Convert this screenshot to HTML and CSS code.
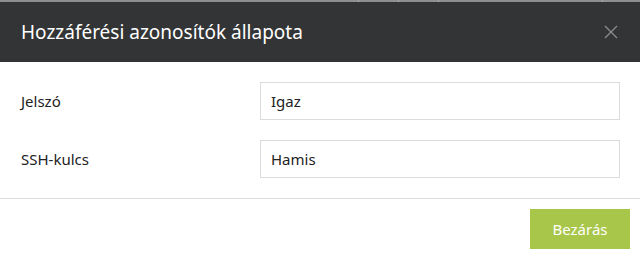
FILE: index.html
```html
<!DOCTYPE html>
<html lang="hu">
<head>
  <meta charset="UTF-8" />
  <meta name="viewport" content="width=device-width, initial-scale=1" />
  <title>Hozzáférési azonosítók állapota</title>
  <link rel="stylesheet" href="styles.css">
</head>
<body>
  <div class="backdrop">
    <span class="seg seg-a"></span>
    <span class="seg seg-b"></span>
    <span class="seg seg-c"></span>
    <span class="seg seg-d"></span>
    <span class="seg seg-e"></span>
  </div>

  <div class="modal">
    <div class="modal-header">
      <h2>Hozzáférési azonosítók állapota</h2>
      <button class="close" aria-label="Bezárás">
        <svg width="14" height="14" viewBox="0 0 14 14">
          <path d="M1 1 L13 13 M13 1 L1 13" stroke="#8c8c8c" stroke-width="1.3" fill="none" />
        </svg>
      </button>
    </div>

    <div class="modal-body">
      <div class="row">
        <label>Jelszó</label>
        <div class="field">Igaz</div>
      </div>
      <div class="row">
        <label>SSH-kulcs</label>
        <div class="field">Hamis</div>
      </div>
    </div>

    <div class="modal-footer">
      <button class="btn-close">Bezárás</button>
    </div>
  </div>
</body>
</html>
```

FILE: styles.css
```css
body { margin: 0; font-family: "Noto Sans", "Open Sans", sans-serif; background: #fff; color: #222; }
.backdrop { display: flex; height: 2px; background: #8e8e8e; }
.seg { height: 2px; border-right: 1px solid #a4a4a4; }
.seg-a { width: 358px; }
.seg-b { width: 39px; }
.seg-c { width: 39px; }
.seg-d { width: 163px; }
.seg-e { flex: 1; border-right: none; }
.modal { background: #fff; }
.modal-header { display: flex; align-items: center; justify-content: space-between; height: 60px; padding: 0 22px 0 21px; background: #333435; }
.modal-header h2 { margin: 0; font-weight: 400; font-size: 19px; color: #fff; }
.close { background: none; border: none; padding: 0; display: flex; cursor: pointer; }
.modal-body { padding: 20px 20px 20px 21px; display: flex; flex-direction: column; gap: 20px; border-bottom: 1px solid #dcdcdc; }
.row { display: flex; align-items: center; }
.row label { width: 239px; font-size: 15px; }
.field { width: 338px; height: 36px; line-height: 36px; padding: 0 10px; border: 1px solid #dcdcdc; font-size: 15px; }
.modal-footer { display: flex; justify-content: flex-end; padding: 10px 10px 0; }
.btn-close { width: 100px; height: 40px; background: #a8c64a; color: #fff; border: none; font-family: inherit; font-size: 15px; }
```
